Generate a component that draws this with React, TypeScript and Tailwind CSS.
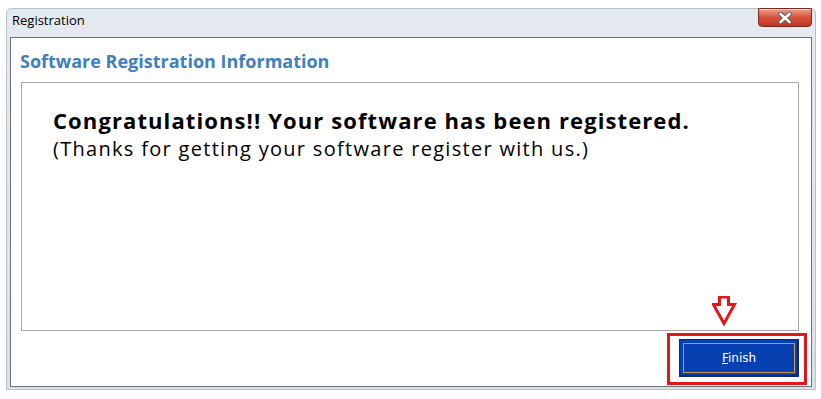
import React from "react";

export default function App() {
  return (
    <div className="w-[821px] h-[399px] bg-white pt-[8px] pl-[6px]">
      <div className="w-[810px] h-[382px] flex flex-col bg-gradient-to-b from-[#e4eaf0] via-[#dfe6ec] to-[#d9e0e7] border border-[#b9c1c8] rounded-t-[5px]">
        <div className="h-[28px] flex items-start justify-between">
          <span
            className="pl-[5px] pt-[3px] text-[13px] leading-[16px] text-black"
            style={{ fontFamily: '"Open Sans", "Noto Sans", sans-serif' }}
          >
            Registration
          </span>
          <div className="mr-[3px] -mt-[1px] w-[54px] h-[19px] rounded-b-[4px] border border-[#7a2b20] bg-gradient-to-b from-[#eda08c] via-[#d6503a] to-[#bf3620] flex items-center justify-center shadow-[inset_0_1px_0_rgba(255,255,255,0.5)]">
            <svg width="16" height="12" viewBox="0 0 16 12">
              <path
                d="M3.5 2 L12.5 10 M12.5 2 L3.5 10"
                stroke="#5a5a5a"
                strokeWidth="4.4"
                strokeLinecap="round"
                fill="none"
              />
              <path
                d="M3.5 2 L12.5 10 M12.5 2 L3.5 10"
                stroke="#ffffff"
                strokeWidth="2.6"
                strokeLinecap="round"
                fill="none"
              />
            </svg>
          </div>
        </div>
        <div className="mx-[3px] mb-[2px] flex-1 border border-[#6f7275] bg-white flex flex-col">
          <div
            className="pl-[9px] pt-[11px] h-[44px] text-[18px] leading-[24px] font-bold text-[#3f7fc0]"
            style={{ fontFamily: '"Open Sans", "Noto Sans", sans-serif' }}
          >
            Software Registration Information
          </div>
          <div className="relative ml-[10px] mr-[12px] h-[249px] border border-[#a8a8a8] pl-[31px] pt-[22px]">
            <div
              className="text-[22px] leading-[30px] font-bold tracking-[1.1px] text-black"
              style={{ fontFamily: '"Open Sans", "Noto Sans", sans-serif' }}
            >
              Congratulations!! Your software has been registered.
            </div>
            <div
              className="text-[20px] leading-[28px] tracking-[1.3px] text-black"
              style={{ fontFamily: '"Open Sans", "Noto Sans", sans-serif' }}
            >
              (Thanks for getting your software register with us.)
            </div>
            <svg
              className="absolute left-[690px] top-[213px]"
              width="26"
              height="30"
              viewBox="0 0 26 30"
            >
              <polygon
                points="7.5,1 16.5,1 16.5,8.5 22.5,8.5 12,27.5 1.5,8.5 7.5,8.5"
                fill="#ffffff"
                stroke="#e8141c"
                strokeWidth="3"
                strokeLinejoin="miter"
              />
            </svg>
          </div>
          <div className="flex justify-end mt-[2px] mr-[4px]">
            <div className="w-[140px] h-[52px] border-[3px] border-[#e8141c] bg-white pl-[9px] pt-[3px]">
              <div className="w-[120px] h-[38px] border border-[#0b2a7a] bg-[#0740b0] p-[3px] shadow-[inset_-1px_-1px_0_#04256e]">
                <div
                  className="w-full h-full border border-[#c89a48] flex items-center justify-center text-white text-[12px]"
                  style={{ fontFamily: 'Tahoma, "DejaVu Sans", "Liberation Sans", sans-serif' }}
                >
                  <span>
                    <span className="underline">F</span>inish
                  </span>
                </div>
              </div>
            </div>
          </div>
        </div>
      </div>
    </div>
  );
}
